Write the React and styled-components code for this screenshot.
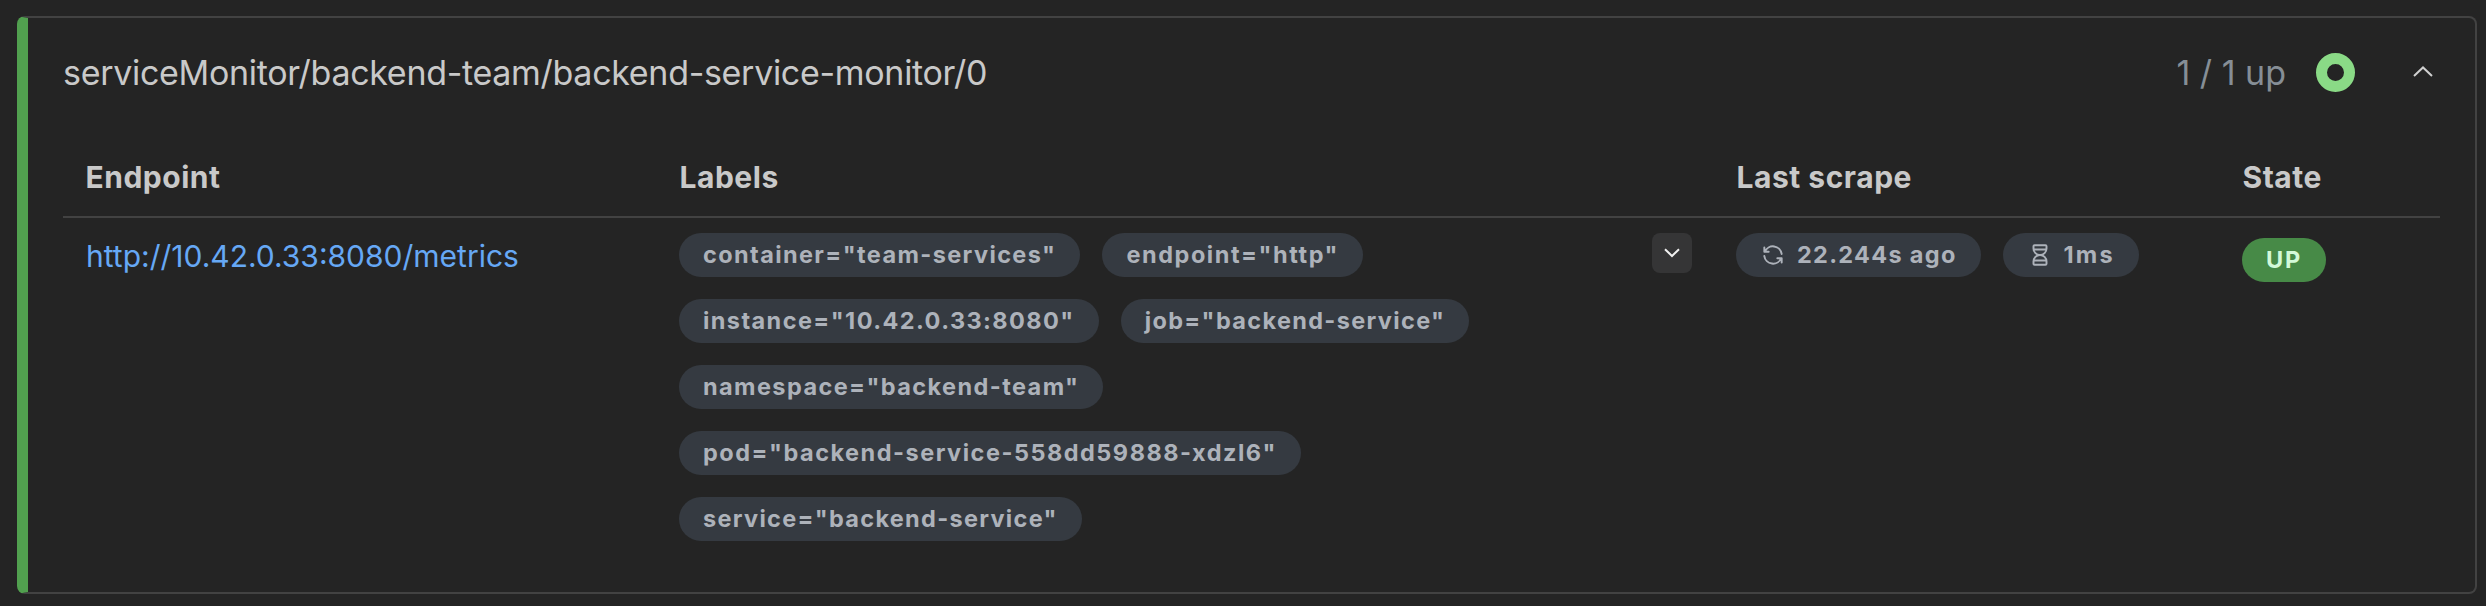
import React from "react";
import styled, { createGlobalStyle } from "styled-components";

const GlobalStyle = createGlobalStyle`
  * { box-sizing: border-box; }
  body { margin: 0; background: #242424; font-family: Inter, sans-serif; color: #c9c9c9; }
`;

const Page = styled.main`
  height: 606px;
  padding: 16px 9px 12px 17px;
`;

const Card = styled.section`
  height: 578px;
  border: 2px solid #424242;
  border-left: 11px solid #51a04f;
  border-radius: 8px;
  padding: 0 35px;
`;

const Header = styled.header`
  display: flex;
  align-items: center;
  height: 109px;
  padding-right: 7px;
`;

const Title = styled.h2`
  flex: 1;
  margin: 0;
  font-size: 34px;
  font-weight: 400;
  letter-spacing: -0.31px;
`;

const Count = styled.span`
  font-size: 34px;
  color: #868e96;
  margin-right: 30px;
`;

const Ring = styled.span`
  width: 39px;
  height: 39px;
  border: 11px solid #8ada86;
  border-radius: 50%;
  margin-right: 58px;
`;

const CollapseIcon = styled.svg`
  margin-top: -3px;
`;

const HeadRow = styled.div`
  display: grid;
  grid-template-columns: 594px 1057px 506px 1fr;
  align-items: center;
  height: 91px;
  padding: 11px 0 0 22px;
  border-bottom: 2px solid #424242;
`;

const HeadCell = styled.div`
  padding-left: 0.5px;
  font-size: 30px;
  font-weight: 700;
  letter-spacing: 0.52px;
`;

const BodyRow = styled.div`
  display: grid;
  grid-template-columns: 594px 1057px 506px 1fr;
  padding: 15px 0 0 22px;
`;

const Endpoint = styled.a`
  padding-left: 1px;
  color: #66a8f5;
  font-size: 30px;
  line-height: 46px;
`;

const LabelsCell = styled.div`
  display: flex;
  justify-content: space-between;
  padding-right: 44px;
`;

const Labels = styled.div`
  display: flex;
  flex-wrap: wrap;
  align-content: flex-start;
  gap: 22px;
  width: 850px;
`;

const Timings = styled.div`
  display: flex;
  align-items: flex-start;
  gap: 22px;
`;

const Badge = styled.span`
  display: inline-flex;
  align-items: center;
  justify-self: start;
  height: 44px;
  margin-top: ${(p) => (p.$up ? "5px" : "0")};
  padding: 0 24px;
  border-radius: 22px;
  background: ${(p) => (p.$up ? "#478a47" : "#353a41")};
  color: ${(p) => (p.$up ? "#d3f9d8" : "#adb2ba")};
  font-size: 23.5px;
  font-weight: 700;
  line-height: 44px;
  letter-spacing: ${(p) => p.$track ?? 1.7}px;
  white-space: nowrap;
`;

const BadgeText = styled.span`
  height: 44px;
`;

const BadgeIcon = styled.svg`
  width: 26px;
  height: 26px;
  margin-right: 11px;
  fill: none;
  stroke: currentColor;
  stroke-width: 1.8;
  stroke-linecap: round;
  stroke-linejoin: round;
`;

const Toggle = styled.button`
  display: flex;
  align-items: center;
  justify-content: center;
  width: 40px;
  height: 40px;
  padding: 0;
  border: 0;
  border-radius: 8px;
  background: #353536;
  color: #f0f0f0;
`;

const labels = [
  { text: 'container="team-services"', track: 1.39 },
  { text: 'endpoint="http"', track: 1.54 },
  { text: 'instance="10.42.0.33:8080"', track: 1.42 },
  { text: 'job="backend-service"', track: 1.34 },
  { text: 'namespace="backend-team"', track: 1.41 },
  { text: 'pod="backend-service-558dd59888-xdzl6"', track: 1.5 },
  { text: 'service="backend-service"', track: 1.3 },
];

export default function App() {
  return (
    <Page>
      <GlobalStyle />
      <Card>
        <Header>
          <Title>serviceMonitor/backend-team/backend-service-monitor/0</Title>
          <Count>1 / 1 up</Count>
          <Ring />
          <CollapseIcon width="20" height="11" viewBox="0 0 20 11" fill="none" stroke="#d0d0d0" strokeWidth="2">
            <path d="M1 10 10 1.5 19 10" />
          </CollapseIcon>
        </Header>
        <HeadRow>
          {["Endpoint", "Labels", "Last scrape", "State"].map((h) => (
            <HeadCell key={h}>{h}</HeadCell>
          ))}
        </HeadRow>
        <BodyRow>
          <Endpoint>http://10.42.0.33:8080/metrics</Endpoint>
          <LabelsCell>
            <Labels>
              {labels.map((l) => (
                <Badge key={l.text} $track={l.track}>
                  <BadgeText>{l.text}</BadgeText>
                </Badge>
              ))}
            </Labels>
            <Toggle aria-label="Show discovered labels">
              <svg width="16" height="10" viewBox="0 0 16 10" fill="none" stroke="currentColor" strokeWidth="2">
                <path d="M1 1.2 8 8 15 1.2" />
              </svg>
            </Toggle>
          </LabelsCell>
          <Timings>
            <Badge $track={1.3}>
              <BadgeIcon viewBox="0 0 24 24">
                <path d="M20 11A8.1 8.1 0 0 0 4.5 9M4 5v4h4" />
                <path d="M4 13a8.1 8.1 0 0 0 15.5 2M20 19v-4h-4" />
              </BadgeIcon>
              <BadgeText>22.244s ago</BadgeText>
            </Badge>
            <Badge $track={2.1}>
              <BadgeIcon viewBox="0 0 24 24">
                <path d="M6.5 7h11M6.5 17h11" />
                <path d="M6 20v-2a6 6 0 1 1 12 0v2a1 1 0 0 1-1 1H7a1 1 0 0 1-1-1z" />
                <path d="M6 4v2a6 6 0 1 0 12 0V4a1 1 0 0 0-1-1H7a1 1 0 0 0-1 1z" />
              </BadgeIcon>
              <BadgeText>1ms</BadgeText>
            </Badge>
          </Timings>
          <Badge $up>
            <BadgeText>UP</BadgeText>
          </Badge>
        </BodyRow>
      </Card>
    </Page>
  );
}
